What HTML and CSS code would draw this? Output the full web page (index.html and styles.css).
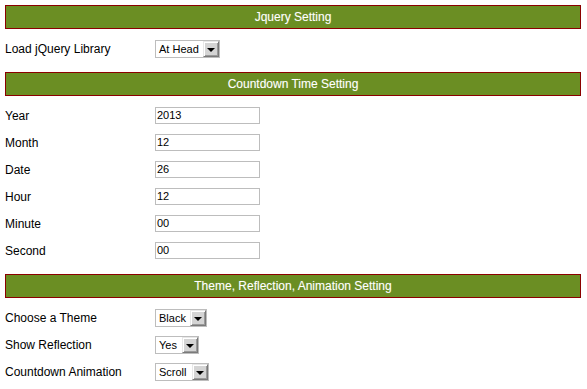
FILE: index.html
```html
<!DOCTYPE html>
<html>
<head>
<meta charset="utf-8">
<link rel="stylesheet" href="styles.css">
</head>
<body>
<div class="page">
  <section class="section">
    <div class="bar">Jquery Setting</div>
    <div class="row"><span class="label">Load jQuery Library</span><span class="select w65"><span class="val">At Head</span><span class="btn"><span class="tri"></span></span></span></div>
  </section>
  <section class="section">
    <div class="bar">Countdown Time Setting</div>
    <div class="row"><span class="label">Year</span><span class="input">2013</span></div>
    <div class="row"><span class="label">Month</span><span class="input">12</span></div>
    <div class="row"><span class="label">Date</span><span class="input">26</span></div>
    <div class="row"><span class="label">Hour</span><span class="input">12</span></div>
    <div class="row"><span class="label">Minute</span><span class="input">00</span></div>
    <div class="row"><span class="label">Second</span><span class="input">00</span></div>
  </section>
  <section class="section">
    <div class="bar">Theme, Reflection, Animation Setting</div>
    <div class="row"><span class="label">Choose a Theme</span><span class="select w52"><span class="val">Black</span><span class="btn"><span class="tri"></span></span></span></div>
    <div class="row"><span class="label">Show Reflection</span><span class="select w44"><span class="val">Yes</span><span class="btn"><span class="tri"></span></span></span></div>
    <div class="row"><span class="label">Countdown Animation</span><span class="select w54"><span class="val">Scroll</span><span class="btn"><span class="tri"></span></span></span></div>
  </section>
</div>
</body>
</html>
```
FILE: styles.css
```css
html, body { margin: 0; padding: 0; background: #fff; }
body { font-family: "Liberation Sans", Arial, sans-serif; color: #000; }
.page { padding: 5px 6px 0 5px; }
.section { margin-bottom: 10px; }
.bar {
  height: 24px;
  box-sizing: border-box;
  background: #6b8e23;
  border: 1px solid #8b0000;
  color: #fff;
  font-size: 12px;
  line-height: 22px;
  text-align: center;
  margin-bottom: 6px;
  text-shadow: 0 0 1px rgba(255,255,255,0.3);
}
.row { height: 27px; display: flex; align-items: center; font-size: 12px; }
.label { width: 150px; flex: none; }
.input {
  width: 105px; height: 17px; box-sizing: border-box;
  border: 1px solid #bdbdbd; font-size: 11px; line-height: 15px; padding-left: 1px;
}
.select {
  height: 18px; box-sizing: border-box; display: flex; align-items: stretch;
  border: 1px solid #bdbdbd; font-size: 11px; background: #fff;
}
.w65 { width: 65px; }
.w52 { width: 52px; }
.w44 { width: 44px; }
.w54 { width: 54px; }
.val { flex: 1; line-height: 16px; padding-left: 3px; white-space: nowrap; overflow: hidden; }
.btn {
  width: 16px; flex: none; box-sizing: border-box;
  background: #d4d4d4;
  border: 1px solid #7a7a7a; border-top-color: #e8e8e8; border-left-color: #e8e8e8;
  box-shadow: inset 1px 1px 0 #fff, inset -1px -1px 0 #9a9a9a;
  display: flex; align-items: center; justify-content: center;
}
.tri { width: 0; height: 0; border-left: 4px solid transparent; border-right: 4px solid transparent; border-top: 4px solid #000; margin-top: 3px; }
```
